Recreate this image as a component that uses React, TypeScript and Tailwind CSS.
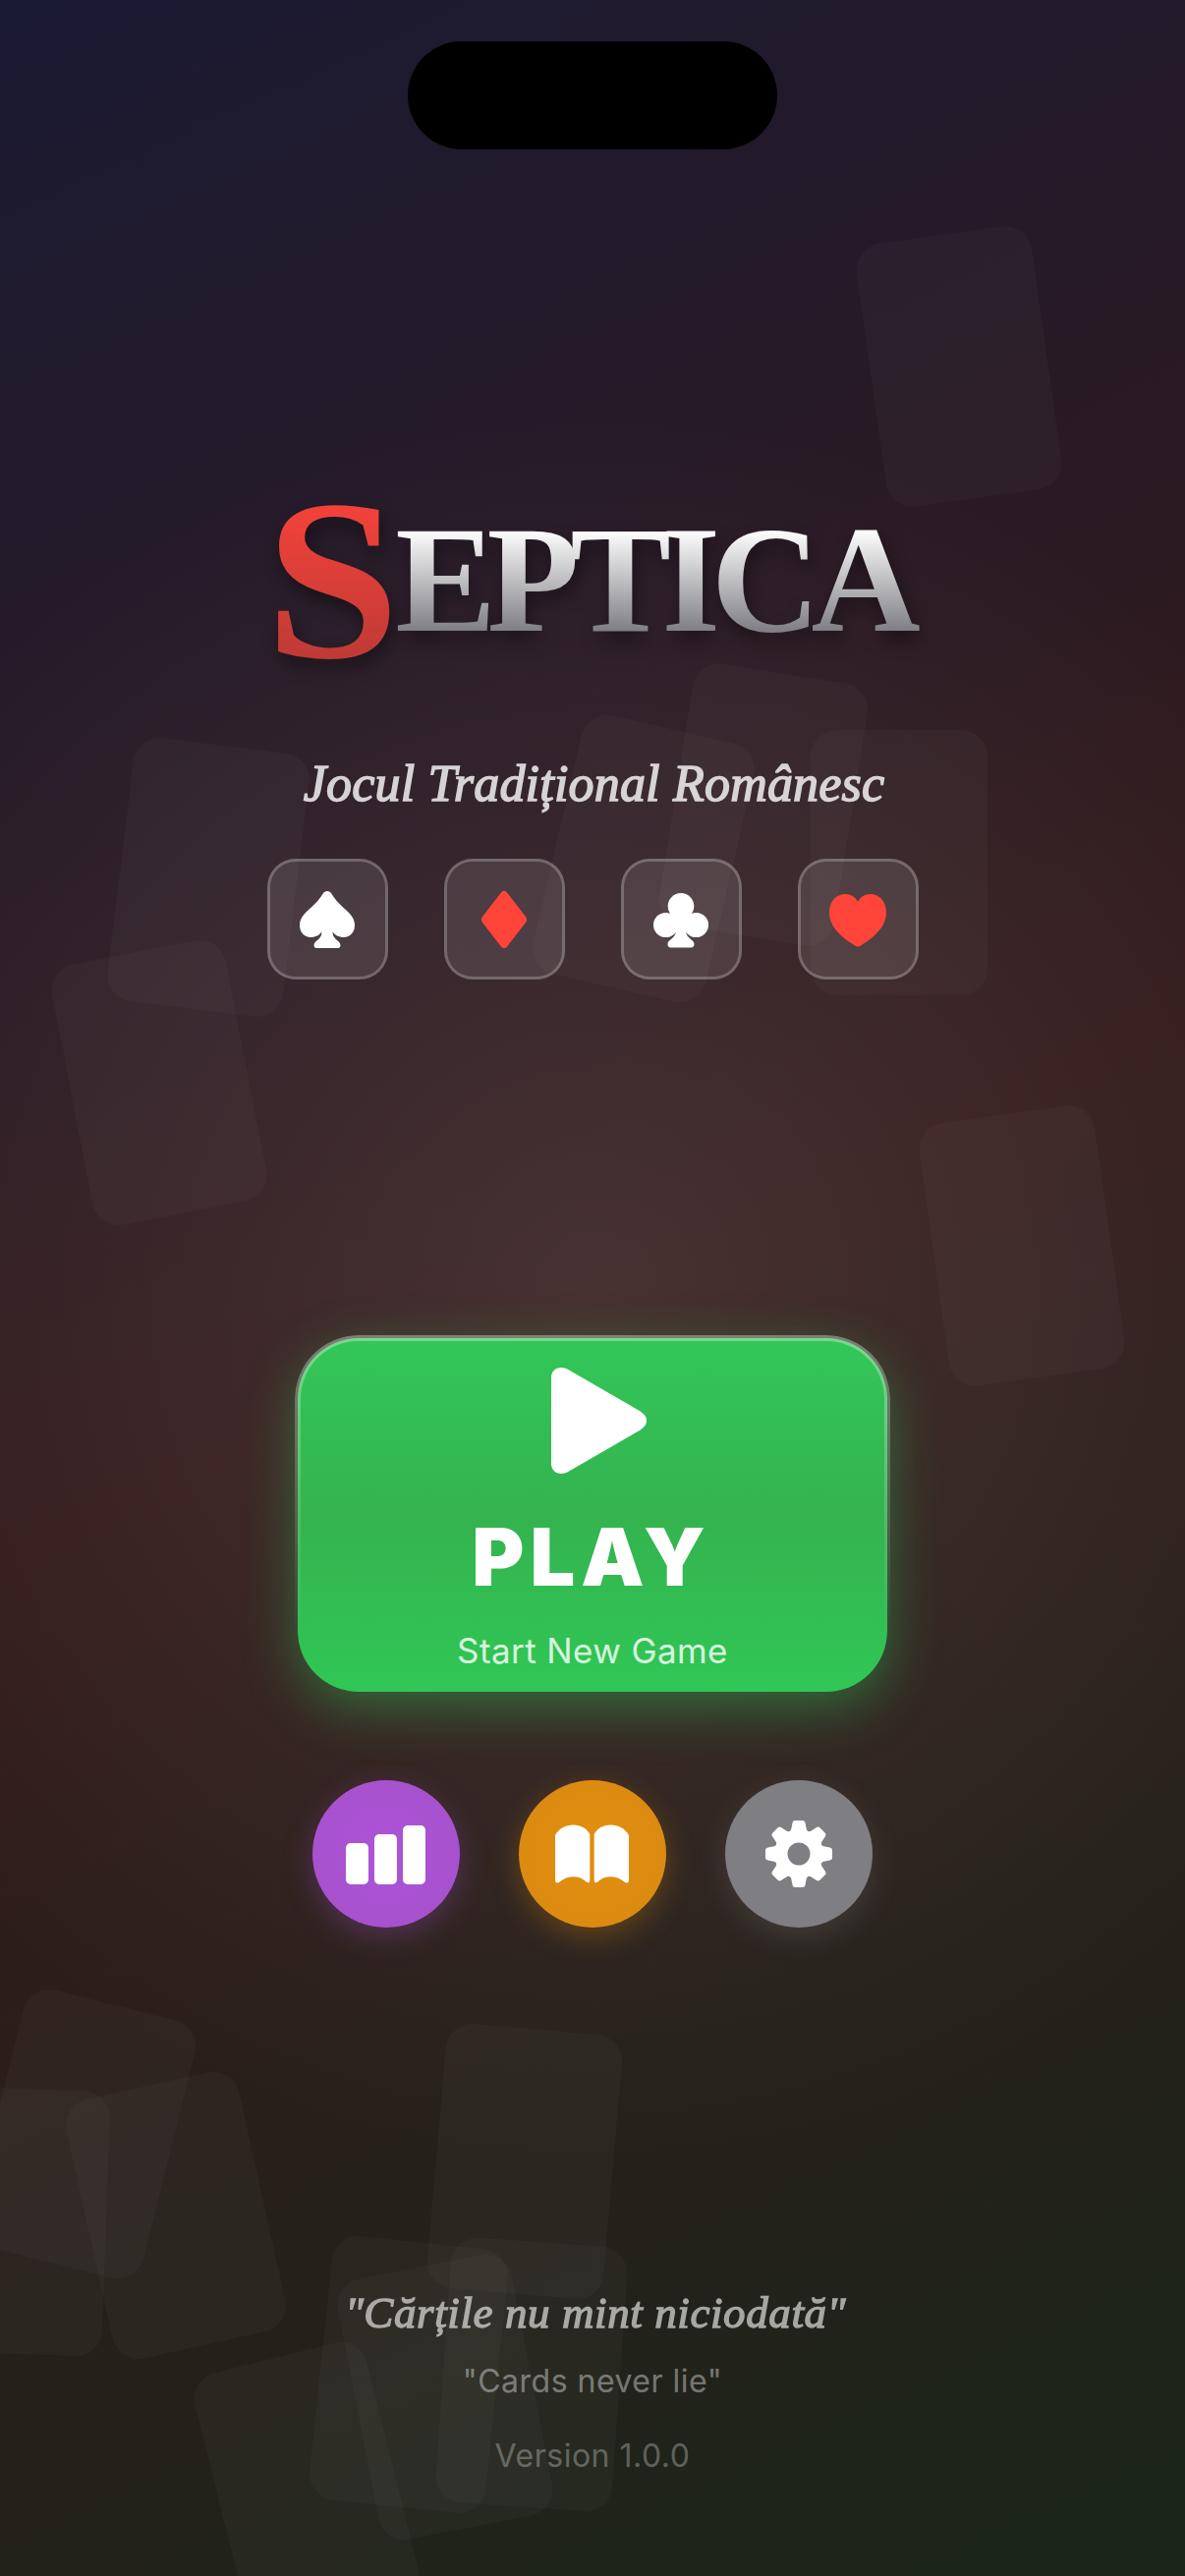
import type { ReactNode } from "react";

const serif = "font-['Liberation_Serif',serif]";

type Card = { x: number; y: number; r: number };

const cards: Card[] = [
  { x: 976, y: 373, r: -8 },
  { x: 212, y: 893, r: 7 },
  { x: 162, y: 1102, r: -11 },
  { x: 655, y: 874, r: 13 },
  { x: 777, y: 819, r: 9 },
  { x: 915, y: 878, r: 0 },
  { x: 1040, y: 1268, r: -8 },
  { x: 85, y: 2172, r: 14 },
  { x: 18, y: 2261, r: 2 },
  { x: 179, y: 2255, r: -12.5 },
  { x: 534, y: 2200, r: 5 },
  { x: 416, y: 2417, r: 6 },
  { x: 453, y: 2440, r: -11 },
  { x: 541, y: 2417, r: 4 },
  { x: 312, y: 2531, r: -14 },
];

function FloatingCards() {
  return (
    <div className="absolute inset-0">
      {cards.map((c, i) => (
        <div
          key={i}
          className="absolute h-[270px] w-[180px] rounded-[27px] bg-white/[0.027]"
          style={{ left: c.x - 90, top: c.y - 135, transform: `rotate(${c.r}deg)` }}
        />
      ))}
    </div>
  );
}

function Spade() {
  return (
    <svg width="56" height="58" viewBox="0 1.5 56 50.5" preserveAspectRatio="none" fill="#fff">
      <path d="M28 1.500C29.800 1.500 31.200 2.300 32.500 4C37 10.800 43 15 48 19C53 23 56 27 56 31.800C56 38 51.300 42.500 45 42.500C39.500 42.500 35.500 40.500 33.500 37.500C33.300 44.500 41.500 45.500 41.500 49.500C41.500 51 40.300 52 38.500 52H17.500C15.700 52 14.500 51 14.500 49.500C14.500 45.500 22.700 44.500 22.500 37.500C20.500 40.500 16.500 42.500 11 42.500C4.700 42.500 0 38 0 31.800C0 27 3 23 8 19C13 15 19 10.800 23.500 4C24.800 2.300 26.200 1.500 28 1.500Z" />
    </svg>
  );
}

function Diamond() {
  return (
    <svg width="56" height="60" viewBox="0 0 56 60" fill="#ff453a">
      <path d="M25 2.500C26.800 0.300 29.200 0.300 31 2.500L50 27C51.500 29 51.500 31 50 33L31 57.500C29.200 59.700 26.800 59.700 25 57.500L6 33C4.500 31 4.500 29 6 27Z" />
    </svg>
  );
}

function Club() {
  return (
    <svg className="mt-[3px]" width="56" height="56" viewBox="0 0 56 56" fill="#fff">
      <circle cx="28" cy="13.300" r="13.300" />
      <circle cx="12.600" cy="32.500" r="12.600" />
      <circle cx="43.400" cy="32.500" r="12.600" />
      <path d="M20 20H36L35 36L33.300 39C33.300 46.500 41.500 47 41.500 52C41.500 54.200 40.300 55.500 38.500 55.500H17.500C15.700 55.500 14.500 54.200 14.500 52C14.500 47 22.700 46.500 22.700 39L21 36Z" />
    </svg>
  );
}

function Heart() {
  return (
    <svg className="mt-[3px]" width="58" height="56" viewBox="0 0 58 56" fill="#ff453a">
      <path d="M29 54.500C27.800 54.500 26.500 53.700 25 52.700C9.500 43.500 0 32.500 0 20C0 8.800 7 1 16.200 1C22 1 26.600 4 29 9C31.400 4 36 1 41.800 1C51 1 58 8.800 58 20C58 32.500 48.500 43.500 33 52.700C31.500 53.700 30.200 54.500 29 54.500Z" />
    </svg>
  );
}

function SuitTile({ children }: { children: ReactNode }) {
  return (
    <div className="flex size-[123px] items-center justify-center rounded-[29px] border-[3px] border-white/30 bg-white/10 bg-clip-padding">
      {children}
    </div>
  );
}

function Gear() {
  const teeth = [0, 45, 90, 135, 180, 225, 270, 315];
  return (
    <svg width="68" height="68" viewBox="-34 -34 68 68">
      <g fill="#fff">
        {teeth.map((a) => (
          <path
            key={a}
            transform={`rotate(${a})`}
            d="M-10.500 -22C-8.500 -23.500 -7.800 -24.500 -7.500 -26.500L-6.500 -31.500C-6.100 -33.300 -5.300 -34 -3.500 -34H3.500C5.300 -34 6.100 -33.300 6.500 -31.500L7.500 -26.500C7.800 -24.500 8.500 -23.500 10.500 -22Z"
          />
        ))}
        <path fillRule="evenodd" d="M0 -24.500A24.500 24.500 0 1 1 0 24.500A24.500 24.500 0 1 1 0 -24.500ZM0 -11.500A11.500 11.500 0 1 0 0 11.500A11.500 11.500 0 1 0 0 -11.500Z" />
      </g>
    </svg>
  );
}

export default function App() {
  return (
    <div className="relative flex h-[2622px] w-[1206px] flex-col items-center overflow-hidden bg-[radial-gradient(circle_900px_at_50%_50%,rgba(255,255,255,0.1),rgba(255,255,255,0)),linear-gradient(155.3deg,#1a1a33_0%,#331a1a_50%,#1a261a_100%)] font-[Inter,sans-serif] text-white">
      <FloatingCards />
      <div className="absolute top-[42px] left-[415px] h-[110px] w-[376px] rounded-full bg-black" />

      <header className="relative flex flex-col items-center pt-[460px]">
        <h1 className={`${serif} flex h-[260px] items-center font-bold whitespace-nowrap [filter:drop-shadow(3px_9px_9px_rgba(0,0,0,0.4))]`}>
          <span className="origin-left scale-x-[1.055] bg-[linear-gradient(180deg,#f8433a_15%,#bb3a35_85%)] bg-clip-text text-[233px] leading-[262px] text-transparent">
            S
          </span>
          <span className="ml-[3px] bg-[linear-gradient(180deg,#ffffff_20%,#808086_80%)] bg-clip-text pr-[9px] text-[154px] leading-[170px] tracking-[-9.5px] text-transparent">
            EPTICA
          </span>
        </h1>
        <p className={`${serif} mt-[46px] h-[64px] pl-[3px] text-[52px] leading-[64px] tracking-[0.2px] whitespace-nowrap italic opacity-80 [-webkit-text-stroke:1.5px_white]`}>
          Jocul Tradițional Românesc
        </p>
      </header>

      <div className="relative mt-[44px] flex gap-[57px]">
        <SuitTile><Spade /></SuitTile>
        <SuitTile><Diamond /></SuitTile>
        <SuitTile><Club /></SuitTile>
        <SuitTile><Heart /></SuitTile>
      </div>

      <button className="relative mt-[365px] flex h-[360px] w-[600px] flex-col items-center rounded-[62px] bg-[linear-gradient(180deg,#32c759_0%,#34b34f_50%,#30c755_100%)] shadow-[0_15px_54px_rgba(48,209,88,0.4)]">
        <span className="absolute -inset-[3px] rounded-[65px] bg-[linear-gradient(180deg,rgba(255,255,255,0.34),rgba(255,255,255,0)_85%)] p-[6px] [mask-composite:exclude] [mask:linear-gradient(#000_0_0)_content-box_exclude,linear-gradient(#000_0_0)]" />
        <svg className="mt-[30px] ml-[12px]" width="97" height="108" viewBox="0 0 97 108" fill="#fff">
          <path d="M0 10C0 4 4.500 0 10 0C13 0 15.500 1 18.500 2.700L89 43.500C94.500 46.700 97 50 97 54C97 58 94.500 61.300 89 64.500L18.500 105.300C15.500 107 13 108 10 108C4.500 108 0 104 0 98Z" />
        </svg>
        <span className="mt-[35px] mr-[2px] h-[100px] text-[81px] leading-[100px] font-black tracking-[6px]">PLAY</span>
        <span className="mt-[23px] text-[35px] leading-[44px] tracking-[0.4px] text-white/80">Start New Game</span>
      </button>

      <div className="relative mt-[88px] flex gap-[60px] pt-[2px]">
        <button className="flex size-[150px] items-end justify-center gap-[6px] rounded-full bg-[radial-gradient(circle,#ad53d8,#a551ca)] pr-[2px] pb-[44px] shadow-[0_9px_30px_rgba(191,90,242,0.25)]">
          <span className="h-[42px] w-[23px] rounded-[5px] bg-white" />
          <span className="h-[51px] w-[23px] rounded-[5px] bg-white" />
          <span className="h-[60px] w-[23px] rounded-[5px] bg-white" />
        </button>
        <button className="flex size-[150px] items-center justify-center rounded-full bg-[radial-gradient(circle,#e0900f,#da8812)] pr-[2px] shadow-[0_9px_30px_rgba(255,159,10,0.25)]">
          <svg width="75" height="60" viewBox="0 0 75 60" fill="#fff">
            <path d="M0 11C4 4 10.500 0.500 18.500 0.500C26.500 0.500 32.500 4.500 35.300 10V57C35.300 59.300 33.500 60 31.800 58.500C28 55 24 53.300 19 53.300C13 53.300 9 55 4.500 58.500C2.500 60 0 59.800 0 57Z" />
            <path d="M75 11C71 4 64.500 0.500 56.500 0.500C48.500 0.500 42.500 4.500 39.700 10V57C39.700 59.300 41.500 60 43.200 58.500C47 55 51 53.300 56 53.300C62 53.300 66 55 70.500 58.500C72.500 60 75 59.800 75 57Z" />
          </svg>
        </button>
        <button className="flex size-[150px] items-center justify-center rounded-full bg-[#7f7e82] shadow-[0_9px_30px_rgba(152,152,157,0.2)]">
          <Gear />
        </button>
      </div>

      <footer className="relative mt-[362px] flex flex-col items-center whitespace-nowrap">
        <p className={`${serif} pl-[6px] text-[45px] leading-[60px] tracking-[0.6px] italic opacity-60 [-webkit-text-stroke:1.3px_white]`}>
          "Cărțile nu mint niciodată"
        </p>
        <p className="mt-[20px] text-[32px] leading-[40px] tracking-[0.5px] text-white/40">"Cards never lie"</p>
        <p className="mt-[36px] text-[32px] leading-[40px] tracking-[0.5px] text-white/30">Version 1.0.0</p>
      </footer>
    </div>
  );
}
